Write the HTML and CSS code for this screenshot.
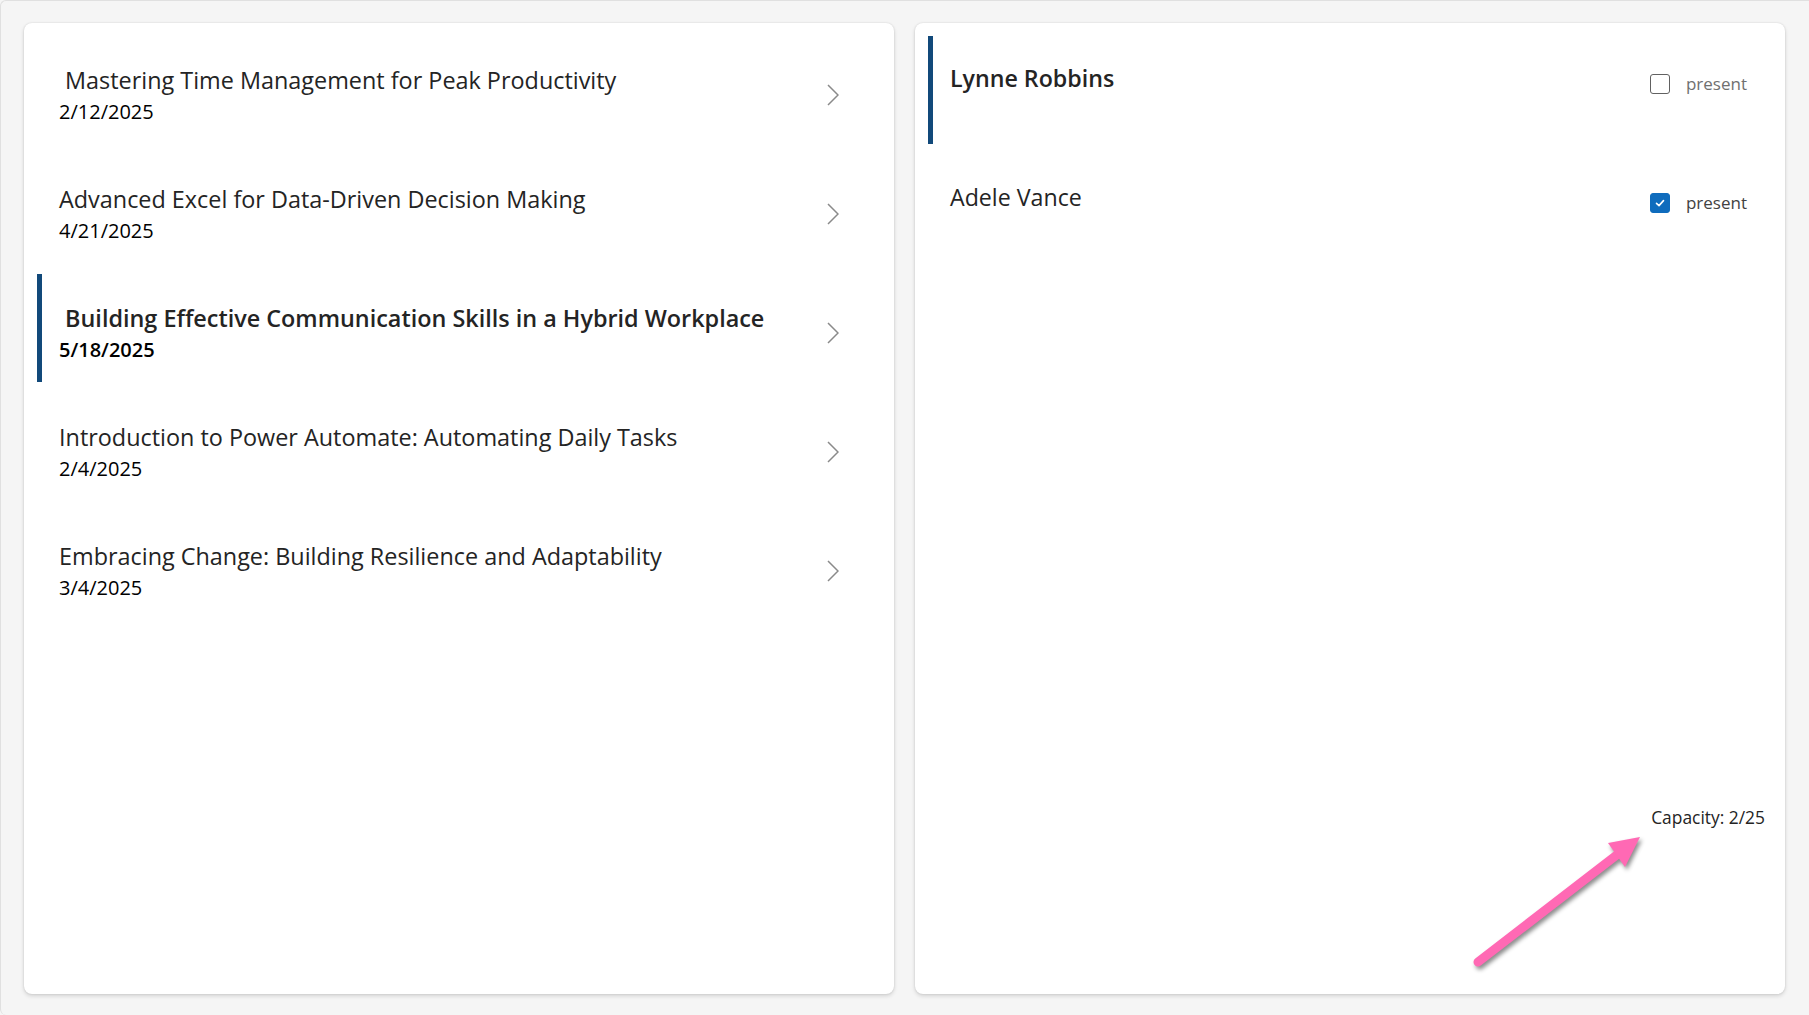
FILE: index.html
```html
<!DOCTYPE html>
<html lang="en">
<head>
<meta charset="utf-8">
<title>Sessions</title>
<link rel="stylesheet" href="styles.css">
</head>
<body>
<div class="frame">
  <section class="card">
    <div class="session">
      <div class="session-text">
        <div class="session-title">&nbsp;Mastering Time Management for Peak Productivity</div>
        <div class="session-date">2/12/2025</div>
      </div>
      <svg class="chevron" viewBox="0 0 12 22"><polyline points="1,1 11,11 1,21"/></svg>
    </div>
    <div class="session">
      <div class="session-text">
        <div class="session-title">Advanced Excel for Data-Driven Decision Making</div>
        <div class="session-date">4/21/2025</div>
      </div>
      <svg class="chevron" viewBox="0 0 12 22"><polyline points="1,1 11,11 1,21"/></svg>
    </div>
    <div class="session selected">
      <div class="session-text">
        <div class="session-title">&nbsp;Building Effective Communication Skills in a Hybrid Workplace</div>
        <div class="session-date">5/18/2025</div>
      </div>
      <svg class="chevron" viewBox="0 0 12 22"><polyline points="1,1 11,11 1,21"/></svg>
    </div>
    <div class="session">
      <div class="session-text">
        <div class="session-title">Introduction to Power Automate: Automating Daily Tasks</div>
        <div class="session-date">2/4/2025</div>
      </div>
      <svg class="chevron" viewBox="0 0 12 22"><polyline points="1,1 11,11 1,21"/></svg>
    </div>
    <div class="session">
      <div class="session-text">
        <div class="session-title">Embracing Change: Building Resilience and Adaptability</div>
        <div class="session-date">3/4/2025</div>
      </div>
      <svg class="chevron" viewBox="0 0 12 22"><polyline points="1,1 11,11 1,21"/></svg>
    </div>
  </section>

  <section class="card card-right">
    <div class="attendees">
      <div class="attendee selected">
        <div class="attendee-name">Lynne Robbins</div>
        <label class="check">
          <span class="box"></span>
          <span class="check-label">present</span>
        </label>
      </div>
      <div class="attendee">
        <div class="attendee-name">Adele Vance</div>
        <label class="check checked">
          <span class="box"><svg viewBox="0 0 12 12"><polyline points="2.5,6.3 5,8.6 9.5,3.6"/></svg></span>
          <span class="check-label">present</span>
        </label>
      </div>
    </div>
    <div class="capacity">Capacity: 2/25</div>
    <svg class="annotation" viewBox="0 0 200 160" width="200" height="160">
      <line x1="18" y1="142" x2="158" y2="34" class="shaft"/>
      <polygon points="180,17 148,23 165,47" class="head"/>
    </svg>
  </section>
</div>
</body>
</html>
```

FILE: styles.css
```css
html, body {
  margin: 0;
  padding: 0;
}
body {
  font-family: "Open Sans", "Noto Sans", sans-serif;
  background: #f5f5f5;
  color: #242424;
}
.frame {
  box-sizing: border-box;
  width: 1809px;
  height: 1015px;
  border-top: 1px solid #e0e0e0;
  border-left: 1px solid #e0e0e0;
  border-top-left-radius: 6px;
  border-bottom-left-radius: 6px;
  background: #f5f5f5;
  padding: 22px 24px 21px 23px;
  display: grid;
  grid-template-columns: 870px 870px;
  column-gap: 21px;
}
.card {
  position: relative;
  box-sizing: border-box;
  background: #ffffff;
  border-radius: 8px;
  box-shadow: 0 0 2px rgba(0,0,0,0.12), 0 2px 4px rgba(0,0,0,0.14);
  padding: 13px 13px;
  display: flex;
  flex-direction: column;
  row-gap: 11px;
}
.session {
  box-sizing: border-box;
  height: 108px;
  padding-top: 10px;
  border-left: 5px solid transparent;
  display: flex;
  align-items: center;
}
.session.selected,
.attendee.selected {
  border-left-color: #11497a;
}
.session-text {
  flex: 1;
  padding-left: 17px;
}
.session-title {
  font-size: 23.4px;
  line-height: 28px;
  color: #242424;
  white-space: pre;
}
.session-date {
  font-size: 20px;
  line-height: 26px;
  margin-top: 5px;
  color: #000000;
}
.selected .session-title,
.selected .session-date {
  font-weight: 600;
}
.chevron {
  width: 12px;
  height: 22px;
  margin-right: 42px;
  fill: none;
  stroke: #8a8a8a;
  stroke-width: 1.5;
}
.card-right {
  row-gap: 0;
}
.attendees {
  flex: 1;
  display: flex;
  flex-direction: column;
  row-gap: 11px;
}
.attendee {
  box-sizing: border-box;
  height: 108px;
  border-left: 5px solid transparent;
  padding-left: 17px;
  padding-right: 25px;
  display: flex;
  align-items: flex-start;
}
.attendee-name {
  flex: 1;
  font-size: 23.2px;
  line-height: 28px;
  margin-top: 28px;
  color: #242424;
}
.attendee.selected .attendee-name {
  font-weight: 600;
}
.check {
  display: flex;
  align-items: center;
  column-gap: 16px;
  margin-top: 38px;
}
.box {
  box-sizing: border-box;
  width: 20px;
  height: 20px;
  border: 1px solid #616161;
  border-radius: 3px;
  display: flex;
  align-items: center;
  justify-content: center;
}
.check.checked .box {
  background: #0f6cbd;
  border-color: #0f6cbd;
}
.box svg {
  width: 12px;
  height: 12px;
  fill: none;
  stroke: #ffffff;
  stroke-width: 1.6;
  stroke-linecap: round;
  stroke-linejoin: round;
}
.check-label {
  font-size: 17px;
  line-height: 20px;
  color: #707070;
}
.check.checked .check-label {
  color: #424242;
}
.capacity {
  align-self: flex-end;
  margin-right: 7px;
  margin-bottom: 152px;
  font-size: 17.4px;
  line-height: 24px;
  color: #242424;
}
.annotation {
  position: absolute;
  left: 545px;
  top: 797px;
  overflow: visible;
  filter: drop-shadow(2px 3px 2px rgba(0,0,0,0.45));
}
.annotation .shaft {
  stroke: #ff69b4;
  stroke-width: 9;
  stroke-linecap: round;
}
.annotation .head {
  fill: #ff69b4;
}
```
